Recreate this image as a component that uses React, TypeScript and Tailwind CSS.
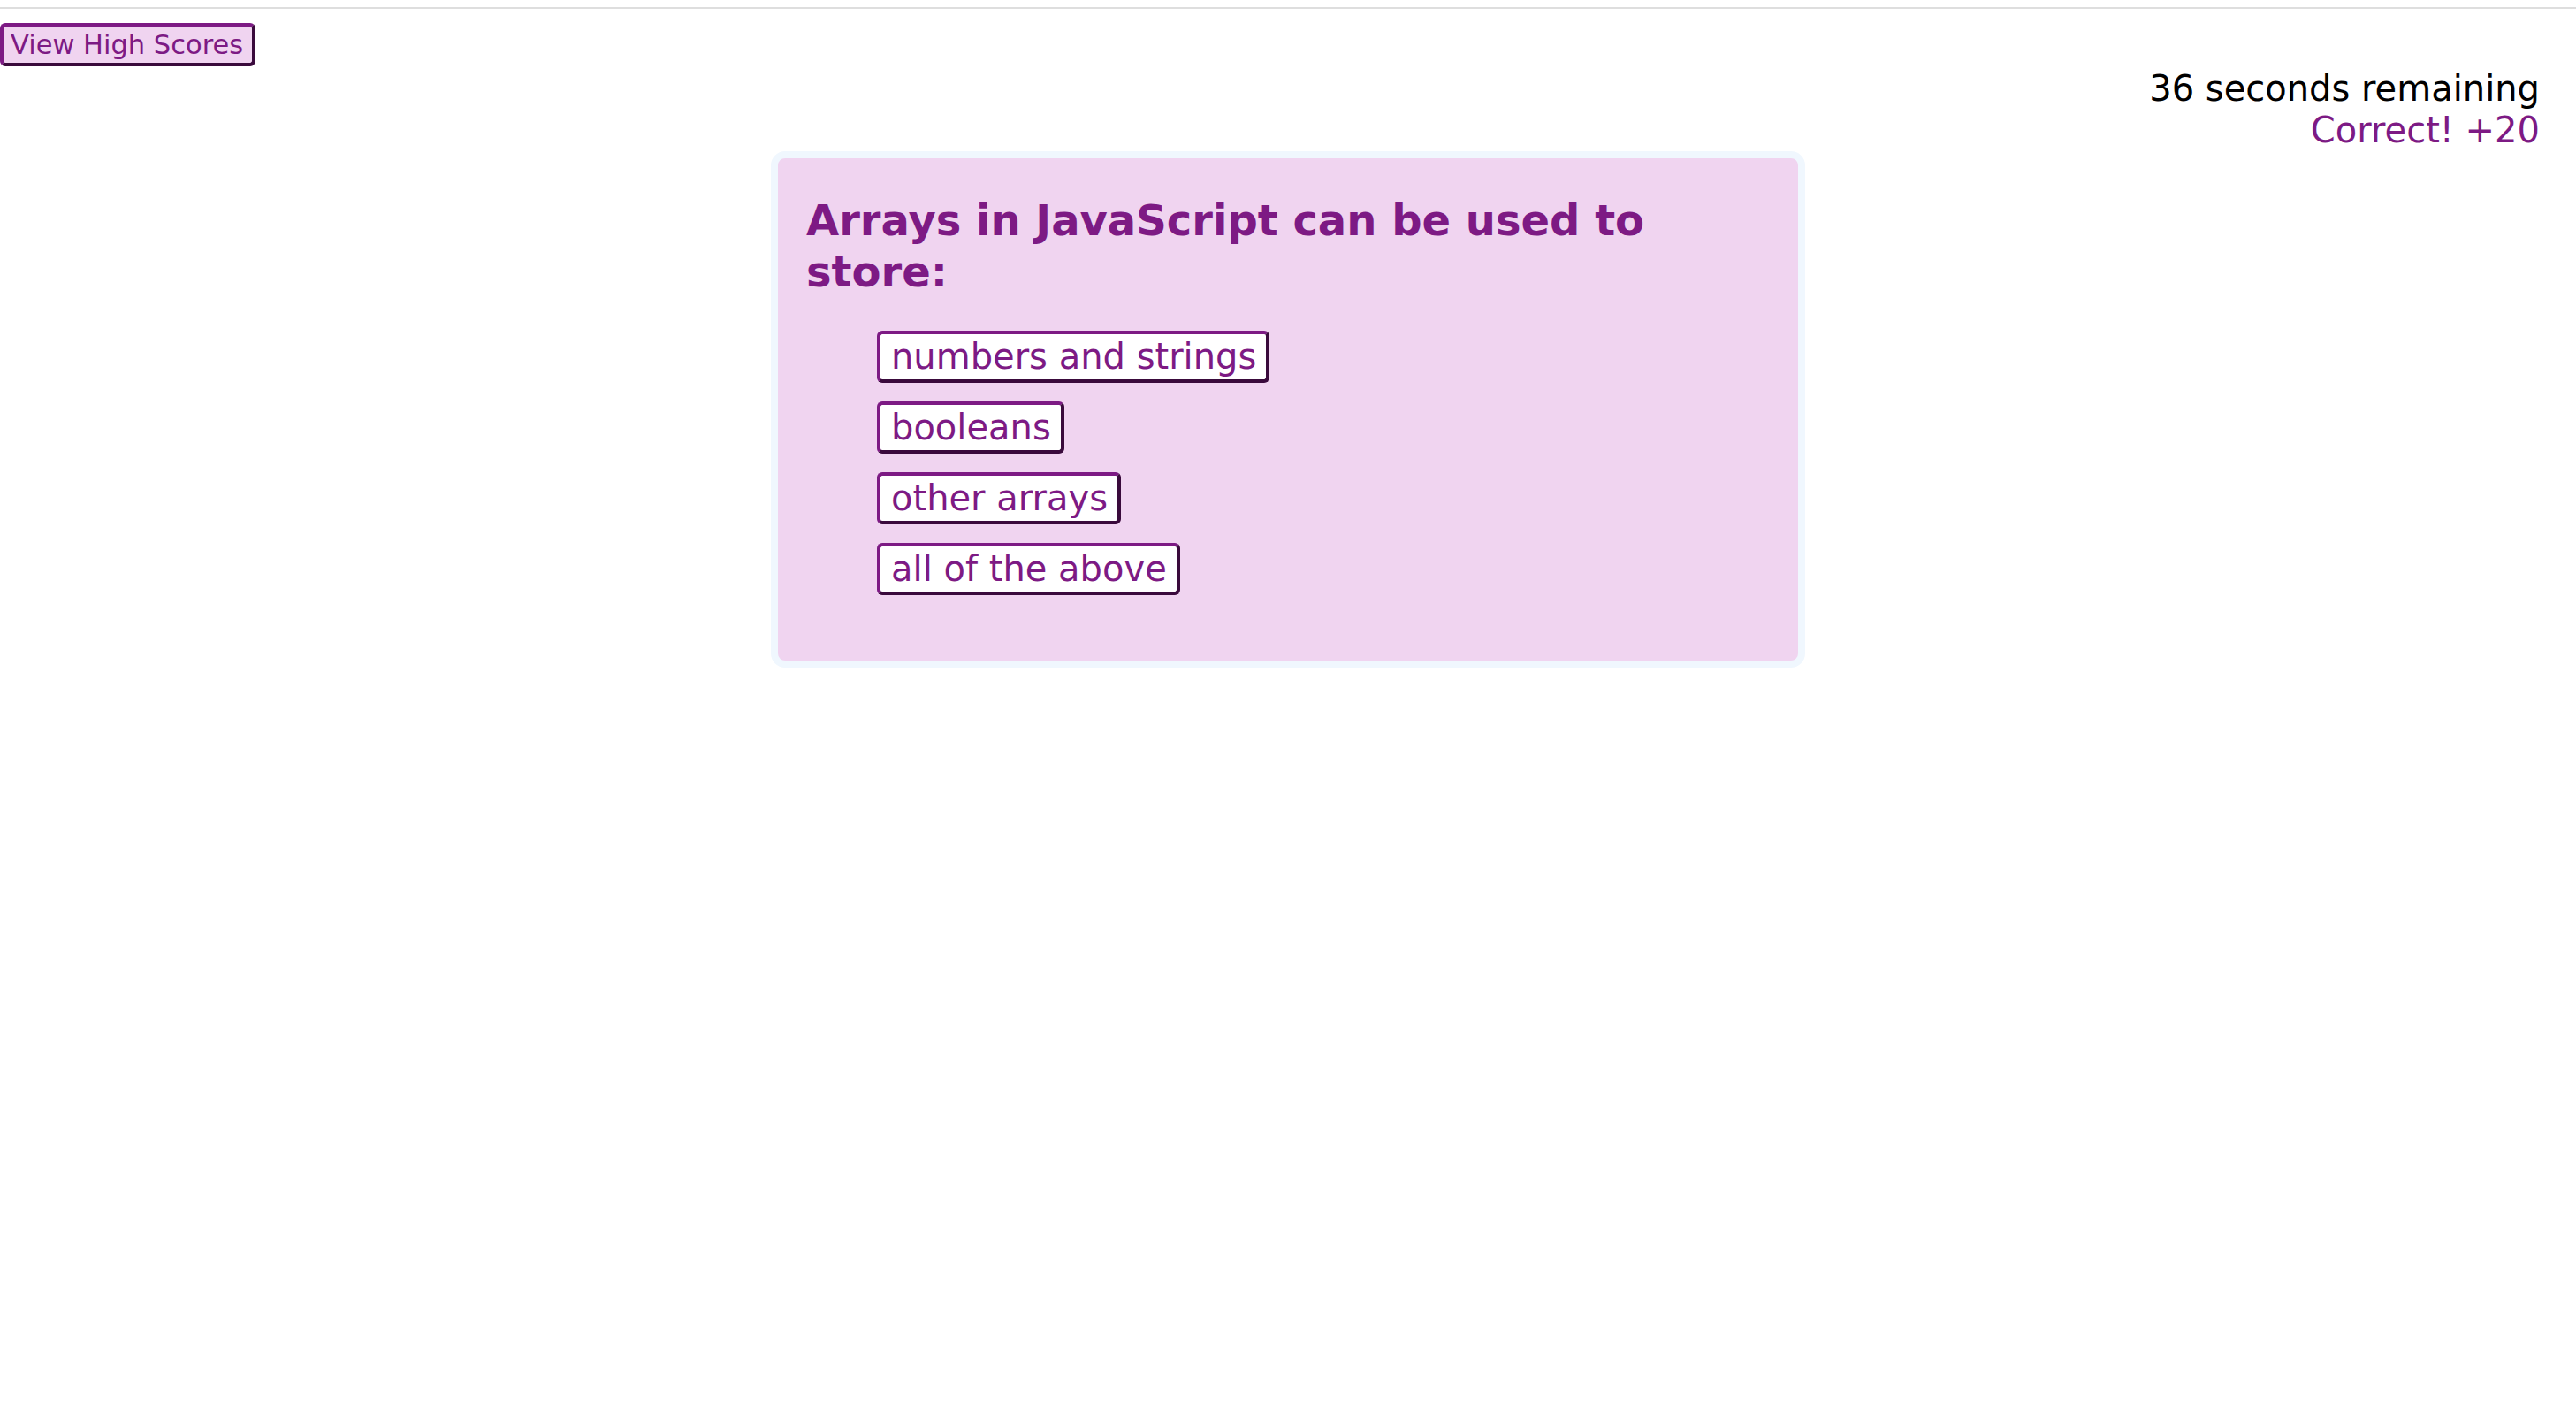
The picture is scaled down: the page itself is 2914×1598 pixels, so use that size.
export default function App() {
  const opts = ["numbers and strings", "booleans", "other arrays", "all of the above"];
  return (
    <div className="min-h-[1598px] bg-white font-['DejaVu_Sans',sans-serif]">
      <div className="pt-[8px]">
        <div className="h-[2px] bg-[#dedede]" />
      </div>
      <div className="pt-[16px]">
        <button className="block rounded-[6px] border-4 border-t-[#7d1a84] border-l-[#7d1a84] border-r-[#3a0a3c] border-b-[#3a0a3c] bg-[#f0d4f0] pl-[8px] pr-[10px] py-[2px] text-[30.5px] leading-[37px] text-[#7d1a84]">
          View High Scores
        </button>
      </div>
      <div className="mt-[2px] pr-[41px] text-right text-[40px] leading-[47px]">
        <div className="text-black">36 seconds remaining</div>
        <div className="text-[#7d1a84]">Correct! +20</div>
      </div>
      <div className="mx-auto w-[1170px] rounded-[16px] border-8 border-[#f0f7fe] bg-[#f0d4f0] pl-[32px] pr-[16px] pt-[41px] pb-[74px]">
        <h2 className="text-[48px] font-bold leading-[58px] text-[#7d1a84]">
          Arrays in JavaScript can be used to store:
        </h2>
        <ul className="mt-[38px] flex flex-col items-start gap-[21px] pl-[80px]">
          {opts.map((o) => (
            <li key={o}>
              <button className="rounded-[6px] border-4 border-t-[#7d1a84] border-l-[#7d1a84] border-r-[#3a0a3c] border-b-[#3a0a3c] bg-white pl-[12px] pr-[11px] py-[1px] text-[40px] leading-[49px] text-[#7d1a84]">
                {o}
              </button>
            </li>
          ))}
        </ul>
      </div>
    </div>
  );
}
